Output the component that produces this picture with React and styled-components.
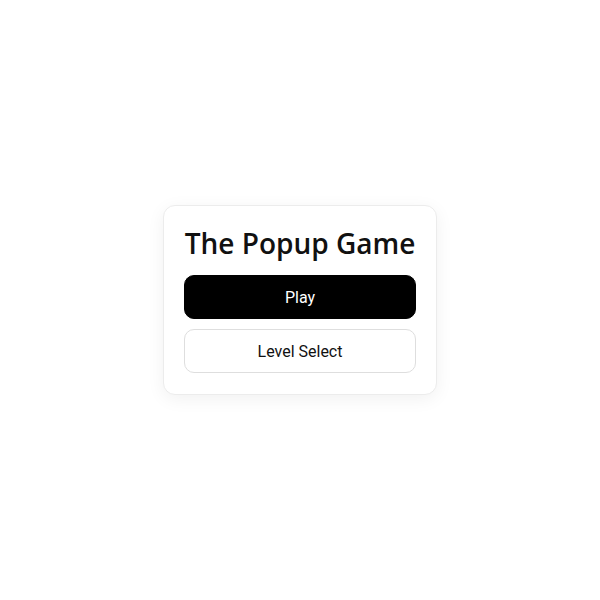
import React from 'react';
import styled, { createGlobalStyle } from 'styled-components';

const GlobalStyle = createGlobalStyle`
  html, body, #root {
    margin: 0;
    height: 100%;
  }
  body {
    background: #ffffff;
    font-family: Roboto, "Liberation Sans", sans-serif;
  }
`;

const Page = styled.div`
  height: 100%;
  display: flex;
  align-items: center;
  justify-content: center;
`;

const Card = styled.div`
  width: 232px;
  padding: 16px 20px 21px;
  display: flex;
  flex-direction: column;
  gap: 10px;
  background: #fff;
  border: 1px solid #ececec;
  border-radius: 12px;
  box-shadow: 0 4px 18px rgba(0, 0, 0, 0.06);
`;

const Title = styled.h1`
  margin: 0;
  font: 600 28px/43px "Open Sans", "Noto Sans", sans-serif;
  color: #111;
  text-align: center;
  white-space: nowrap;
`;

const Button = styled.button`
  height: 44px;
  width: 100%;
  border-radius: 10px;
  font: 400 16px Roboto, "Liberation Sans", sans-serif;
  cursor: pointer;
  background: ${({ $primary }) => ($primary ? '#000' : '#fff')};
  color: ${({ $primary }) => ($primary ? '#fff' : '#111')};
  border: 1px solid ${({ $primary }) => ($primary ? '#000' : '#dedede')};
`;

export default function App() {
  return (
    <>
      <GlobalStyle />
      <Page>
        <Card>
          <Title>The Popup Game</Title>
          <Button $primary>Play</Button>
          <Button>Level Select</Button>
        </Card>
      </Page>
    </>
  );
}
